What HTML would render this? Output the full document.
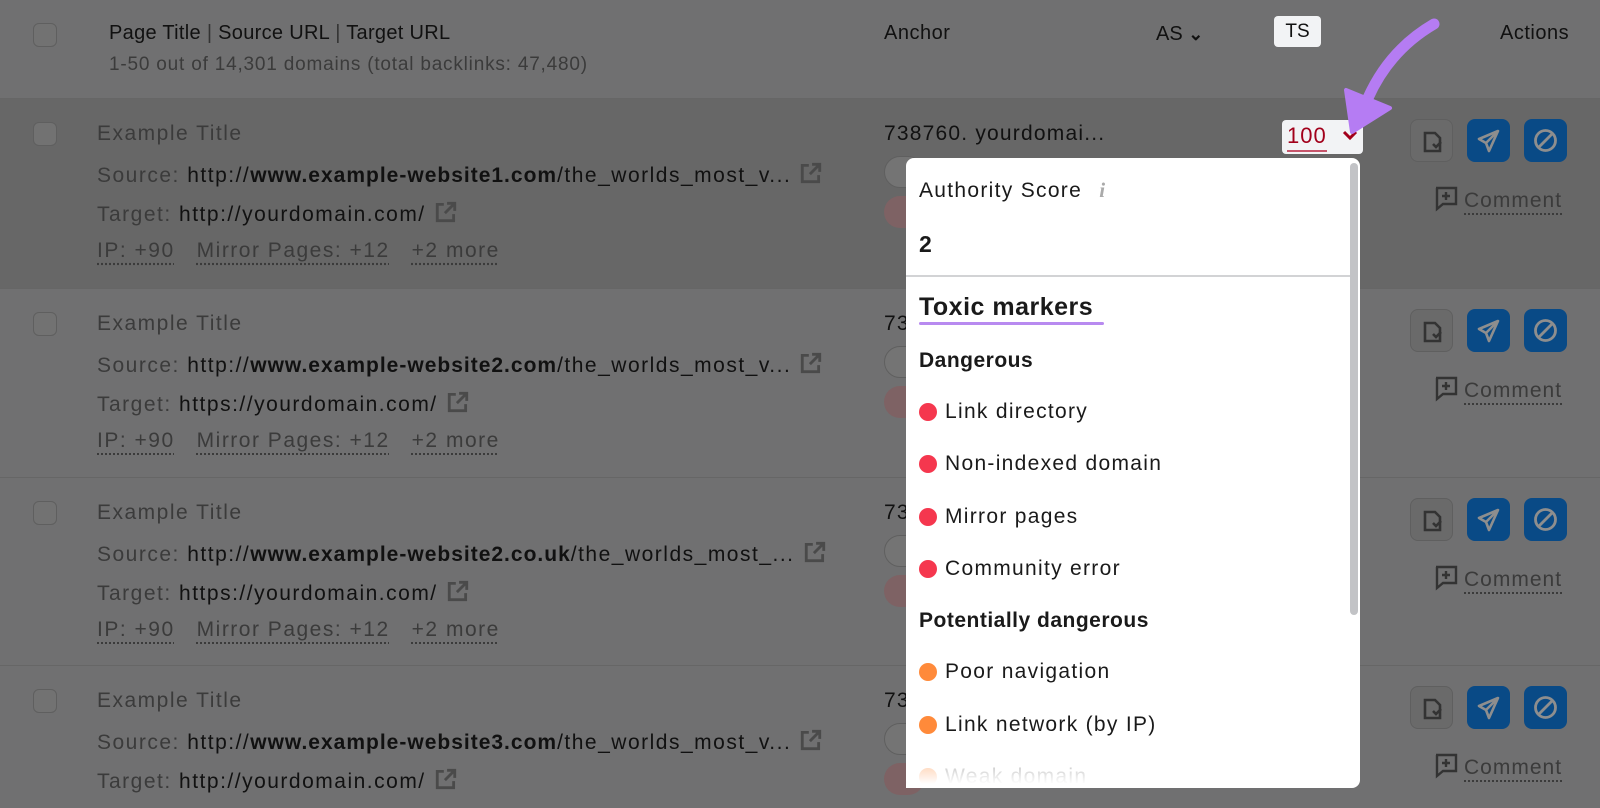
<!DOCTYPE html>
<html><head><meta charset="utf-8"><style>
*{margin:0;padding:0;box-sizing:border-box}
body{width:1600px;height:808px;overflow:hidden;background:#707071;font-family:"Liberation Sans",Arial,sans-serif;position:relative;color:#111}
.a{position:absolute;white-space:nowrap}
.row{position:absolute;left:0;width:1600px;border-top:1px solid #666}
.cb{position:absolute;left:33px;width:24px;height:24px;border:1.5px solid #5f5f5f;border-radius:6px;background:#727272}
.t{font-size:20px;line-height:24px}
.rt{font-size:21px;letter-spacing:1.5px}
.rt b{letter-spacing:1px}
.g{color:#3b3b3b}
.k{color:#111}
.dot{text-decoration:underline dotted #3b3b3b;text-underline-offset:6px;color:#3b3b3b}
.btn{position:absolute;width:43px;height:43px;border-radius:8px}
.gb{background:#6a6a6a;border:1px solid #5f5f5f}
.bb{background:#094a86}
.pill{position:absolute;left:884px;width:40px;height:32px;border-radius:16px;border:1px solid #5f5f5f;background:#747474}
.pr{position:absolute;left:884px;width:40px;height:32px;border-radius:16px;background:#7e6264}
.pop{position:absolute;left:906px;top:158px;width:454px;height:630px;background:#fff;border-radius:8px;overflow:hidden}
.p{position:absolute;white-space:nowrap;font-size:21px;line-height:26px;color:#1a1a1a;letter-spacing:1.3px}
.pb{font-weight:bold;letter-spacing:0.5px}
.d{position:absolute;left:919px;width:18px;height:18px;border-radius:50%}
.r{background:#f5374e}.o{background:#ff8a3a}
</style></head><body>
<!-- header -->
<div class="cb" style="top:23px"></div>
<div class="a t k" style="left:109px;top:21px;letter-spacing:0.3px">Page Title <span style="color:#333">|</span> Source URL <span style="color:#333">|</span> Target URL</div>
<div class="a t g" style="left:109px;top:53px;font-size:19px;letter-spacing:0.8px">1-50 out of 14,301 domains (total backlinks: 47,480)</div>
<div class="a t k" style="left:884px;top:21px;letter-spacing:0.5px">Anchor</div>
<div class="a t k" style="left:1156px;top:22px">AS <span style="font-weight:bold;font-size:18px">&#8964;</span></div>
<div class="a" style="left:1274px;top:16px;width:47px;height:31px;background:#f2f3f5;border-radius:4px;font-size:19px;line-height:31px;text-align:center">TS</div>
<div class="a t k" style="left:1500px;top:21px;letter-spacing:0.5px">Actions</div>

<div class="row" style="top:98px;height:190px;background:#676767"></div>
<div class="row" style="top:288px;height:189px"></div>
<div class="row" style="top:477px;height:188px"></div>
<div class="row" style="top:665px;height:143px"></div>

<div id="rows"></div>
<script>
var data=[[98,"http://","www.example-website1.com","/the_worlds_most_v...","http://yourdomain.com/"],[288,"http://","www.example-website2.com","/the_worlds_most_v...","https://yourdomain.com/"],[477,"http://","www.example-website2.co.uk","/the_worlds_most_...","https://yourdomain.com/"],[665,"http://","www.example-website3.com","/the_worlds_most_v...","http://yourdomain.com/"]];
var h="";var ext='<svg width="24" height="24" viewBox="0 0 22 22" style="vertical-align:-3px;margin-left:8px" fill="none" stroke="#4a4a4a" stroke-width="2.6"><path d="M9 4H3v15h15v-6"/><path d="M12 3h7v7M19 3l-9 9"/></svg>';
data.forEach(function(d,i){var y=d[0];
h+='<div class="cb" style="top:'+(y+24)+'px"></div>';
h+='<div class="a t rt g" style="left:97px;top:'+(y+24)+'px">Example Title</div>';
h+='<div class="a t rt" style="left:97px;top:'+(y+63)+'px"><span class="g">Source: </span>'+d[1]+'<b>'+d[2]+'</b>'+d[3]+ext+'</div>';
h+='<div class="a t rt" style="left:97px;top:'+(y+102)+'px"><span class="g">Target: </span>'+d[4]+ext+'</div>';
if(i<3)h+='<div class="a t rt" style="left:97px;top:'+(y+141)+'px"><span class="dot">IP: +90</span>&nbsp;&nbsp;&nbsp;<span class="dot">Mirror Pages: +12</span>&nbsp;&nbsp;&nbsp;<span class="dot">+2 more</span></div>';
h+='<div class="a t rt" style="left:884px;top:'+(y+24)+'px;letter-spacing:1.2px">'+(i==0?'738760. yourdomai...':'73')+'</div>';
h+='<div class="pill" style="top:'+(y+58)+'px"></div><div class="pr" style="top:'+(y+98)+'px"></div>';
h+='<div class="btn gb" style="left:1410px;top:'+(y+21)+'px"><svg width="43" height="43" viewBox="0 0 43 43" fill="none" stroke="#333" stroke-width="2.6"><path d="M24 13h-10v18h15V18z"/><path d="M22 24l3 3 5-5" /></svg></div>';
h+='<div class="btn bb" style="left:1467px;top:'+(y+21)+'px"><svg width="43" height="43" viewBox="0 0 43 43" fill="none" stroke="#8e8e8e" stroke-width="2.6" stroke-linejoin="round"><path d="M31 12L12 20l7 4 3 8z"/><path d="M19 24l12-12"/></svg></div>';
h+='<div class="btn bb" style="left:1524px;top:'+(y+21)+'px"><svg width="43" height="43" viewBox="0 0 43 43" fill="none" stroke="#8e8e8e" stroke-width="2.8"><circle cx="21.5" cy="21.5" r="10"/><path d="M14.5 28.5l14-14"/></svg></div>';
h+='<div class="a t rt" style="left:1434px;top:'+(y+88)+'px;color:#3b3b3b;letter-spacing:1px"><svg width="24" height="26" viewBox="0 0 24 26" style="vertical-align:-5px;margin-right:6px" fill="none" stroke="#333" stroke-width="2.4"><path d="M2 2h20v16H9l-6 5V2z"/><path d="M12 6v8M8 10h8"/></svg><span class="dot">Comment</span></div>';
});
document.getElementById("rows").innerHTML=h;
</script>

<!-- 100 box -->
<div class="a" style="left:1282px;top:120px;width:81px;height:34px;background:#f2f3f5;border-radius:4px"></div>
<div class="a" style="left:1287px;top:122px;font-size:22px;line-height:28px;color:#a2001b;border-bottom:2px solid #c6546a;letter-spacing:1px">100</div>
<svg class="a" style="left:1342px;top:128px" width="16" height="14" viewBox="0 0 16 14"><path d="M2 4l6 6 6-6" fill="none" stroke="#a2001b" stroke-width="3"/></svg>

<!-- popup -->
<div class="pop">
 <div style="position:absolute;left:444px;top:5px;width:8px;height:452px;background:#c2c3c6;border-radius:4px"></div>
 <div style="position:absolute;left:0;top:117px;width:444px;height:2px;background:#d2d3d5"></div>
 <div style="position:absolute;left:13px;top:164px;width:185px;height:3px;background:#b88af0;border-radius:2px"></div>
</div>
<div class="p" style="left:919px;top:177px">Authority Score <span style="color:#aaa;font-style:italic;font-family:'Liberation Serif',serif;font-weight:bold;margin-left:10px">i</span></div>
<div class="p pb" style="left:919px;top:231px;font-size:23px">2</div>
<div class="p pb" style="left:919px;top:292px;font-size:25px;line-height:30px">Toxic markers</div>
<div class="p pb" style="left:919px;top:348px">Dangerous</div>
<div class="d r" style="top:403px"></div><div class="p" style="left:945px;top:399px">Link directory</div>
<div class="d r" style="top:455px"></div><div class="p" style="left:945px;top:451px">Non-indexed domain</div>
<div class="d r" style="top:508px"></div><div class="p" style="left:945px;top:504px">Mirror pages</div>
<div class="d r" style="top:560px"></div><div class="p" style="left:945px;top:556px">Community error</div>
<div class="p pb" style="left:919px;top:608px">Potentially dangerous</div>
<div class="d o" style="top:663px"></div><div class="p" style="left:945px;top:659px">Poor navigation</div>
<div class="d o" style="top:716px"></div><div class="p" style="left:945px;top:712px">Link network (by IP)</div>
<div style="position:absolute;left:906px;top:762px;width:444px;height:26px;overflow:hidden">
 <div class="d o" style="left:13px;top:6px;opacity:.45"></div><div class="p" style="left:39px;top:2px;color:#bbb">Weak domain</div>
</div>
<div style="position:absolute;left:906px;top:762px;width:444px;height:26px;background:linear-gradient(rgba(255,255,255,0.1),#fff 85%)"></div>

<!-- arrow -->
<svg class="a" style="left:1330px;top:10px" width="120" height="140" viewBox="0 0 120 140">
<path d="M104 14C80 28 55 50 38 88" fill="none" stroke="#b57cf3" stroke-width="11" stroke-linecap="round"/>
<path d="M16 80L22 122L60 98z" fill="#b57cf3" stroke="#b57cf3" stroke-width="4" stroke-linejoin="round"/>
</svg>
</body></html>
